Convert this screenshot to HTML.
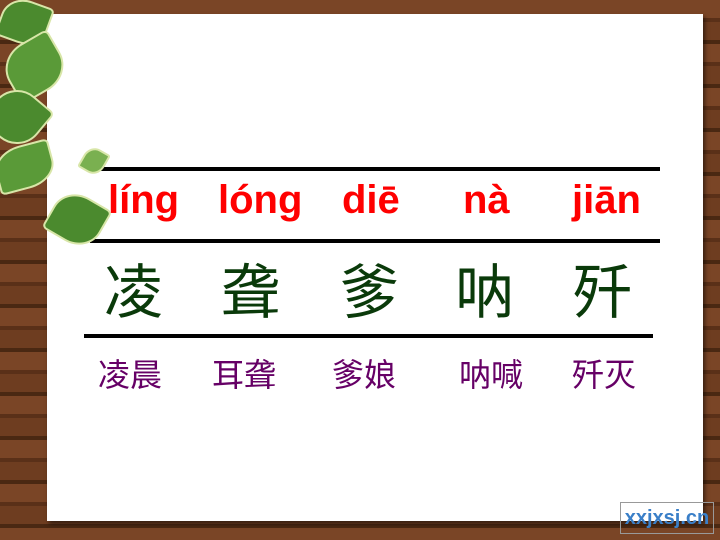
<!DOCTYPE html>
<html><head><meta charset="utf-8"><style>
body{margin:0;width:720px;height:540px;overflow:hidden;position:relative;background:#5e3419;
background-image:repeating-linear-gradient(180deg,#7a4526 0 18px,#5a3018 18px 22px,#6e3d20 22px 40px,#4a2812 40px 44px);}
.paper{position:absolute;left:47px;top:14px;width:656px;height:507px;background:#fff;box-shadow:2px 3px 4px rgba(0,0,0,.5)}
.ln{position:absolute;height:4px;background:#000}
.t{position:absolute;white-space:nowrap;line-height:1.15}
.py{font-family:"Liberation Sans",sans-serif;font-weight:bold;color:#f00;font-size:40px;top:177px}
.big{font-family:"Liberation Sans","Noto Sans CJK SC",sans-serif;color:#0a3a0a;font-size:59px;top:260px}
.sm{font-family:"Liberation Sans","Noto Sans CJK SC",sans-serif;color:#660066;font-size:32px;top:357px}
.lf{position:absolute;border-radius:50% 10% 50% 10%;background:#4b8a2e;border:2px solid #d8e6a8}
</style></head><body>
<div class="paper"></div>
<div class="ln" style="left:90px;top:167px;width:570px"></div>
<div class="ln" style="left:90px;top:239px;width:570px"></div>
<div class="ln" style="left:84px;top:334px;width:569px"></div>
<div class="t py" style="left:108px">líng</div>
<div class="t py" style="left:218px">lóng</div>
<div class="t py" style="left:342px">diē</div>
<div class="t py" style="left:463px">nà</div>
<div class="t py" style="left:572px">jiān</div>
<div class="t big" style="left:104px">凌</div>
<div class="t big" style="left:221px">聋</div>
<div class="t big" style="left:340px">爹</div>
<div class="t big" style="left:455px">呐</div>
<div class="t big" style="left:573px">歼</div>
<div class="t sm" style="left:98px">凌晨</div>
<div class="t sm" style="left:212px">耳聋</div>
<div class="t sm" style="left:332px">爹娘</div>
<div class="t sm" style="left:459px">呐喊</div>
<div class="t sm" style="left:572px">歼灭</div>
<div class="lf" style="left:0;top:0;width:45px;height:40px;transform:rotate(20deg)"></div>
<div class="lf" style="left:5px;top:40px;width:55px;height:50px;transform:rotate(-30deg);background:#5a9a38"></div>
<div class="lf" style="left:-10px;top:90px;width:50px;height:50px;transform:rotate(40deg)"></div>
<div class="lf" style="left:-5px;top:145px;width:55px;height:40px;transform:rotate(-15deg);background:#5a9a38"></div>
<div class="lf" style="left:50px;top:195px;width:50px;height:45px;transform:rotate(30deg)"></div>
<div class="lf" style="left:82px;top:148px;width:20px;height:22px;transform:rotate(30deg);background:#7ab050"></div>
<div class="t" style="left:620px;top:502px;width:92px;height:30px;border:1px solid #999;font:bold 20px 'Liberation Sans',sans-serif;color:#3a7fc8;line-height:30px;text-align:center">xxjxsj.cn</div>
</body></html>
